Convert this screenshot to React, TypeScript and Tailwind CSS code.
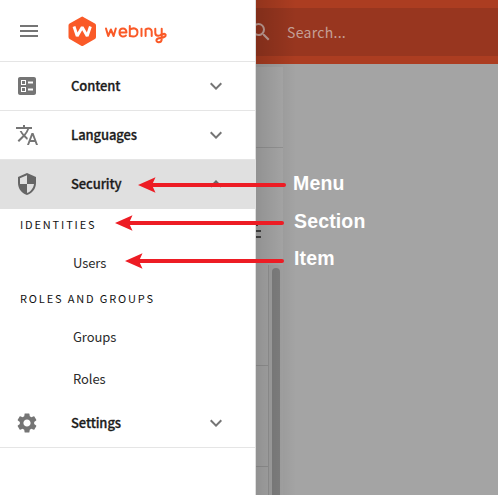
import { MdMenu, MdBallot, MdTranslate, MdSecurity, MdSettings, MdKeyboardArrowDown, MdKeyboardArrowUp, MdSearch } from 'react-icons/md';
import type { IconType } from 'react-icons';

function MenuRow({ icon: Icon, label, open = false }: { icon: IconType; label: string; open?: boolean }) {
  return (
    <div className={`flex h-[49px] shrink-0 items-center border-b pl-[15px] ${open ? '-mr-px border-[#e0e0e0] bg-[#e0e0e0] text-[#666]' : 'border-[#e5e5e5] text-[#757575]'}`}>
      <Icon className="size-6" />
      <span className="ml-8 w-[133px] text-[13px] font-medium leading-5 tracking-[-0.1px] text-[#1c1c1c] [-webkit-text-stroke:0.3px_#1c1c1c]">{label}</span>
      {open ? <MdKeyboardArrowUp className="size-6" /> : <MdKeyboardArrowDown className="size-6" />}
    </div>
  );
}

function Section({ label }: { label: string }) {
  return <div className="flex h-8 shrink-0 items-center pb-0.5 pl-5 text-[11px] tracking-[1.85px] text-[#111]">{label}</div>;
}

function Item({ label }: { label: string }) {
  return <div className="flex h-[42px] shrink-0 items-center pl-[73px] pt-0.5 text-[13px] tracking-[-0.1px] text-[#2b2b2b]">{label}</div>;
}

function Logo() {
  return (
    <svg className="ml-[27px] h-8 w-[102px]" viewBox="0 0 102 32" fill="none">
      <path d="M15.2 1.9 26.9 8.5Q28 9.2 28 10.5v11.6q0 1.3-1.1 1.9L15.2 30.7q-1 .6-2 0L1.6 24Q.5 23.4.5 22.1V10.5Q.5 9.2 1.6 8.5L13.2 1.9q1-.6 2 0Z" fill="#fa5a28" />
      <path d="m6 11.500 3.200 9.500 5-8.700 5 8.700 3.200-9.500" stroke="white" strokeWidth="2.900" strokeLinejoin="bevel" />
      <g stroke="#fa5a28" strokeWidth="2" strokeLinecap="round" strokeLinejoin="round">
        <path d="m38 13.5 2.2 7.500 2.700-6.500 2.700 6.500 2.200-7.500" />
        <path d="M52.300 17.500h6.200c0-5.300-7-5.300-7 .1 0 4.400 4.200 4.700 6.400 2.900" />
        <path d="M61.800 11v10c6.200 1.500 7.700-.9 7.700-3.800 0-4-4.500-4.900-7.700-2.400" />
        <path d="M73.500 13.700V21M77.600 21v-6.700c3.100-1.700 6.100-.6 6.100 2.300V21" />
        <path d="M87.300 13.700v4c0 4 5.100 4 6.400 1v-5V24c0 4.500-6.200 3.800-5.200.8C89.500 22.300 96 24 97.600 20.800c.6-1.800-1.700-2.600-2.800-1.300" />
      </g>
    </svg>
  );
}

const callouts = [
  { label: 'Menu', tip: 138, y: 185, end: 286, x: 293, top: 172 },
  { label: 'Section', tip: 115, y: 223, end: 284, x: 294, top: 210 },
  { label: 'Item', tip: 125, y: 261, end: 284, x: 294, top: 247 },
];

export default function App() {
  return (
    <div className="relative flex h-[495px] w-[498px] overflow-hidden bg-[#a4a4a4] font-['Noto_Sans_CJK_SC',sans-serif]">
      <aside className="flex w-64 shrink-0 flex-col border-r border-[#dedede] bg-white">
        <header className="flex h-[62px] shrink-0 items-center border-b border-[#e5e5e5] pl-[17px]">
          <MdMenu className="size-6 text-[#757575]" />
          <Logo />
        </header>
        <MenuRow icon={MdBallot} label="Content" />
        <MenuRow icon={MdTranslate} label="Languages" />
        <MenuRow icon={MdSecurity} label="Security" open />
        <Section label="IDENTITIES" />
        <Item label="Users" />
        <Section label="ROLES AND GROUPS" />
        <Item label="Groups" />
        <Item label="Roles" />
        <MenuRow icon={MdSettings} label="Settings" />
      </aside>

      <main className="flex min-w-0 grow flex-col">
        <div className="h-16 shrink-0 bg-[#ac3d21] py-2">
          <div className="flex h-12 items-center overflow-hidden bg-[#98361f] text-[#c5a097]">
            <MdSearch className="-ml-[7px] size-6 shrink-0" />
            <span className="ml-[14px] text-sm tracking-[0.3px]">Search...</span>
          </div>
        </div>
        <div className="mt-[3px] flex w-[27px] grow flex-col bg-[#ababab]">
          <div className="h-[81px] shrink-0 border-b border-[#979797]" />
          <div className="flex h-[117px] shrink-0 flex-col gap-1 pt-[77px]">
            <div className="-mt-px h-0.5 w-0.5 bg-[#444]" />
            <div className="h-0.5 w-[5px] bg-[#444]" />
            <div className="h-0.5 w-[5px] bg-[#444]" />
          </div>
          <div className="flex grow">
            <div className="w-[13px] border-r border-[#969696]">
              <div className="h-[101px] border-b border-[#969696]" />
              <div className="h-[101px] border-b border-[#969696]" />
            </div>
            <div className="grow bg-[#a6a6a6] pl-[3px] pt-[3px]">
              <div className="h-full w-2 rounded-t-full bg-[#828282]" />
            </div>
          </div>
        </div>
      </main>
      <div className="absolute inset-y-0 left-64 w-10 bg-linear-to-r from-black/15 to-transparent" />

      <svg className="absolute inset-0" width="498" height="495">
        {callouts.map((c) => (
          <g key={c.label} fill="#ed1c24">
            <path d={`M${c.tip + 12} ${c.y}H${c.end - 2}`} stroke="#ed1c24" strokeWidth="4" strokeLinecap="round" />
            <path d={`M${c.tip} ${c.y}l17.5-7.8-3.5 7.8 3.5 7.8Z`} />
          </g>
        ))}
      </svg>
      {callouts.map((c) => (
        <span key={c.label} className="absolute font-['Liberation_Sans',sans-serif] text-[19.5px] font-bold leading-[22px] tracking-[0.15px] text-white" style={{ left: c.x, top: c.top }}>
          {c.label}
        </span>
      ))}
    </div>
  );
}
